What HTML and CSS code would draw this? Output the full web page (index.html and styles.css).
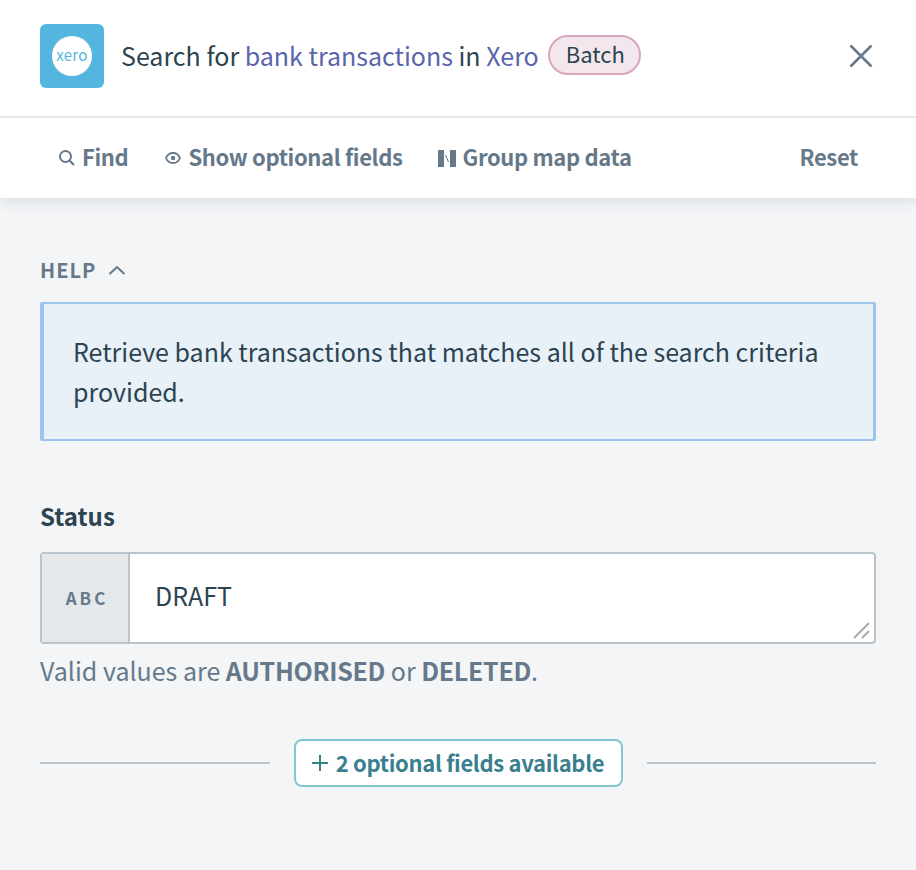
FILE: index.html
```html
<!doctype html>
<html lang="en">
<head>
    <meta charset="UTF-8">
    <title>Search for bank transactions in Xero</title>
    <link rel="stylesheet" href="styles.css">
</head>
<body>
<div class="top">
    <div class="head">
        <div class="logo"><div class="logo-circle">xero</div></div>
        <div class="title">Search for <a>bank transactions</a> in <a>Xero</a></div>
        <span class="batch">Batch</span>
        <svg class="close" width="26" height="26" viewBox="0 0 26 26"><path d="M2.500 2.500L23.500 23.500M23.500 2.500L2.500 23.500" stroke="#66798a" stroke-width="2.600" fill="none"/></svg>
    </div>
    <div class="tools">
        <span class="tool tool-find">
            <svg width="18" height="18" viewBox="0 0 18 18"><circle cx="7.500" cy="7.500" r="5.500" stroke="#66798a" stroke-width="2" fill="none"/><path d="M11.500 11.500L16 16" stroke="#66798a" stroke-width="2.200" fill="none"/></svg>
            Find
        </span>
        <span class="tool tool-show">
            <svg width="16" height="12" viewBox="0 0 16 12"><path d="M8 1C4.500 1 2 3.500 1 6c1 2.500 3.500 5 7 5s6-2.500 7-5c-1-2.500-3.500-5-7-5z" stroke="#66798a" stroke-width="1.800" fill="none"/><circle cx="8" cy="6" r="2.200" fill="#66798a"/></svg>
            Show optional fields
        </span>
        <span class="tool">
            <svg width="18" height="17" viewBox="0 0 18 17"><rect x="0" y="0" width="6" height="17" fill="#66798a"/><rect x="12" y="0" width="6" height="17" fill="#66798a"/><path d="M7.500 5l3 7" stroke="#66798a" stroke-width="1" fill="none"/></svg>
            Group map data
        </span>
        <span class="reset">Reset</span>
    </div>
</div>

<div class="main">
    <div class="help-label">
        HELP
        <svg width="18" height="10" viewBox="0 0 18 10"><path d="M1.500 9L9 2l7.500 7" stroke="#66798a" stroke-width="2" fill="none"/></svg>
    </div>
    <div class="help-box">Retrieve bank transactions that matches all of the search criteria provided.</div>

    <div class="field-label">Status</div>
    <div class="input">
        <div class="input-type">ABC</div>
        <div class="input-value">DRAFT</div>
        <svg class="grip" width="18" height="18" viewBox="0 0 18 18"><path d="M1 17L16 2M9 17L16 10" stroke="#aaa" stroke-width="2" fill="none"/></svg>
    </div>
    <div class="hint">Valid values are <b>AUTHORISED</b> or <b>DELETED</b>.</div>

    <div class="more">
        <div class="rule"></div>
        <div class="more-btn">
            <svg width="16" height="16" viewBox="0 0 16 16"><path d="M8 0V16M0 8H16" stroke="#3a7f8f" stroke-width="2" fill="none"/></svg>
            <span class="more-text">2 optional fields available</span>
        </div>
        <div class="rule"></div>
    </div>
</div>
</body>
</html>
```

FILE: styles.css
```css
*{
    box-sizing: border-box;
}
body{
    margin:0;
    height:870px;
    overflow:hidden;
    background-color: #f3f5f7;
    font-family: "Noto Sans CJK SC", "Noto Sans", sans-serif;
    color:#2c4350;
}

.top{
    background-color: #fff;
    box-shadow: 0 2px 14px rgba(60,80,95,.16);
}
.head{
    height:118px;
    padding:0 42px 4px 40px;
    display:flex;
    align-items:center;
    border-bottom:2px solid #e4e7eb;
}
.logo{
    width:64px;
    height:64px;
    border-radius:6px;
    background-color: #53b5e0;
    display:flex;
    align-items:center;
    justify-content:center;
}
.logo-circle{
    width:40px;
    height:40px;
    border-radius:50%;
    background-color: #fff;
    color:#53b5e0;
    font-size:15px;
    letter-spacing:.3px;
    line-height:38px;
    text-align:center;
}
.title{
    margin-left:17px;
    padding-bottom:3px;
    font-size:25px;
    line-height:36px;
}
.title a{
    color:#5a64ad;
}
.batch{
    margin-left:9px;
    margin-bottom:2px;
    height:40px;
    padding:0 14px 0 16px;
    border:2px solid #d8a6bf;
    border-radius:20px;
    background-color: #f3e6ed;
    font-size:22px;
    line-height:33px;
}
.close{
    margin-left:auto;
}

.tools{
    height:80px;
    padding:0 58px 4px;
    display:flex;
    align-items:center;
    gap:36px;
    color:#66798a;
    font-size:22px;
    font-weight:700;
    letter-spacing:-.35px;
}
.tool{
    display:flex;
    align-items:center;
    gap:7px;
}
.tool svg{
    margin-top:4px;
}
.tool-find{
    gap:6px;
    margin-right:1px;
}
.tool-show{
    margin-right:-1px;
}
.reset{
    margin-left:auto;
}

.main{
    padding:58px 40px 0;
}
.help-label{
    display:flex;
    align-items:center;
    gap:12px;
    height:28px;
    color:#66798a;
    font-size:20px;
    font-weight:700;
    line-height:24px;
    letter-spacing:1px;
}
.help-box{
    margin-top:18px;
    height:139px;
    padding:27px 29px 0;
    background-color: #e8f0f8;
    border:2px solid #9cc4ee;
    border-left-width:4px;
    border-right-width:3px;
    border-radius:2px;
    font-size:25px;
    line-height:40px;
}
.field-label{
    margin-top:58px;
    font-size:24px;
    line-height:34px;
    font-weight:700;
}
.input{
    position:relative;
    margin-top:19px;
    height:92px;
    display:flex;
    background-color: #fff;
    border:2px solid #b8c4cd;
    border-radius:4px;
}
.input-type{
    width:88px;
    padding-left:4px;
    background-color: #e4e8eb;
    border-right:2px solid #b8c4cd;
    color:#66798a;
    font-size:17px;
    font-weight:700;
    letter-spacing:3px;
    text-align:center;
    line-height:88px;
}
.input-value{
    padding-left:25px;
    font-size:25px;
    line-height:82px;
}
.grip{
    position:absolute;
    right:3px;
    bottom:3px;
}
.hint{
    margin-top:7px;
    color:#66798a;
    font-size:25px;
    line-height:38px;
}
.hint b{
    font-weight:700;
    letter-spacing:-.3px;
}
.more{
    margin-top:50px;
    display:flex;
    align-items:center;
    gap:24px;
}
.rule{
    flex:1;
    height:2px;
    background-color: #bcc5cc;
}
.more-btn{
    width:329px;
    height:48px;
    display:flex;
    align-items:center;
    justify-content:center;
    gap:8px;
    background-color: #fff;
    border:2px solid #82c6cf;
    border-radius:8px;
    color:#3a7f8f;
    font-size:22px;
    font-weight:700;
    letter-spacing:-.33px;
}
.more-text{
    padding-bottom:3px;
}
```
